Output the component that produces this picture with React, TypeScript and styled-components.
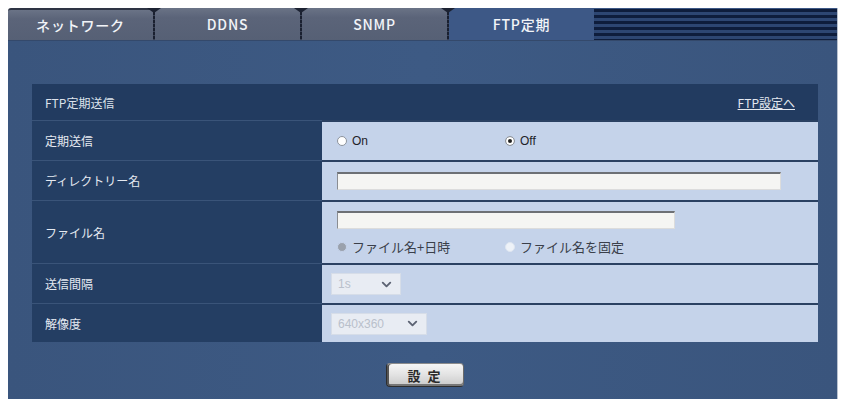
import React from 'react';
import styled, { createGlobalStyle } from 'styled-components';
import { ChevronDown } from 'lucide-react';

const GlobalStyle = createGlobalStyle`
    body {
        margin: 0;
        background: #ffffff;
        font-family: "Noto Sans CJK JP", "Liberation Sans", sans-serif;
    }
`

type RowPropsType = {
    h: number
}

type RadioPropsType = {
    checked?: boolean
    faint?: boolean
}

const tabs = ['ネットワーク', 'DDNS', 'SNMP', 'FTP定期']

export default function App() {
    return (
        <>
            <GlobalStyle />
            <Page>
                <Panel>
                    <TabBar>
                        {tabs.map((t, i) => (
                            <React.Fragment key={t}>
                                {i > 0 && <Divider />}
                                <Tab active={i === tabs.length - 1} first={i === 0}>{t}</Tab>
                            </React.Fragment>
                        ))}
                        <Stripes />
                    </TabBar>
                    <Body>
                        <Table>
                            <HeaderRow>
                                <span>FTP定期送信</span>
                                <HeaderLink href={'#'}>FTP設定へ</HeaderLink>
                            </HeaderRow>

                            <Row h={40}>
                                <Label>定期送信</Label>
                                <Value>
                                    <Options>
                                        <Option><Radio />On</Option>
                                        <Option><Radio checked />Off</Option>
                                    </Options>
                                </Value>
                            </Row>

                            <Row h={40}>
                                <Label>ディレクトリー名</Label>
                                <Value>
                                    <TextInput w={444} />
                                </Value>
                            </Row>

                            <Row h={63}>
                                <Label>ファイル名</Label>
                                <Value column>
                                    <TextInput w={338} />
                                    <Options soft>
                                        <Option><Radio checked faint />ファイル名+日時</Option>
                                        <Option><Radio faint />ファイル名を固定</Option>
                                    </Options>
                                </Value>
                            </Row>

                            <Row h={40}>
                                <Label>送信間隔</Label>
                                <Value>
                                    <Select w={70}>
                                        <span>1s</span>
                                        <ChevronDown size={15} strokeWidth={3} color={'#5c6373'} />
                                    </Select>
                                </Value>
                            </Row>

                            <Row h={39}>
                                <Label>解像度</Label>
                                <Value>
                                    <Select w={96}>
                                        <span>640x360</span>
                                        <ChevronDown size={15} strokeWidth={3} color={'#5c6373'} />
                                    </Select>
                                </Value>
                            </Row>
                        </Table>
                        <ButtonRow>
                            <SetButton>設 定</SetButton>
                        </ButtonRow>
                    </Body>
                </Panel>
            </Page>
        </>
    );
}

const Page = styled.div`
    padding: 8px 5px 2px 8px;
`
const Panel = styled.div`
    width: 830px;
    display: flex;
    flex-direction: column;
    border-right: 1px solid #b9c2cf;
    box-sizing: border-box;
`
const TabBar = styled.div`
    display: flex;
    height: 33px;
    box-sizing: border-box;
    border-bottom: 1px solid #34496b;
`
const Tab = styled.div<{ active?: boolean, first?: boolean }>`
    width: 145px;
    display: flex;
    align-items: center;
    justify-content: center;
    font-size: 14px;
    font-weight: 500;
    letter-spacing: 0.8px;
    color: #f2f4f8;
    background: ${props => props.active
        ? '#3d5886'
        : 'linear-gradient(#6a7386 0%, #5b6479 30%, #566075 100%)'};
    border-top-left-radius: ${props => props.first ? '3px' : '0'};
    border-top: ${props => props.first ? '2px solid #2e3444' : 'none'};
    box-sizing: border-box;
`
const Divider = styled.div`
    width: 2px;
    position: relative;
    background: repeating-linear-gradient(#1a2030 0 3px, #3a4256 3px 4px);
    &::before {
        content: '';
        position: absolute;
        top: 0;
        left: -6px;
        border-left: 7px solid transparent;
        border-right: 7px solid transparent;
        border-top: 5px solid #1c2232;
    }
`
const Stripes = styled.div`
    flex: 1;
    background: #3d5886;
    background-image: repeating-linear-gradient(#0e1d3c 0 3px, #2d4672 3px 6px);
    background-size: 100% 31px;
    background-position: 0 1px;
    background-repeat: no-repeat;
`
const Body = styled.div`
    background: linear-gradient(90deg, #3a557d 0%, #3d5a84 50%, #3a557d 100%);
    padding: 43px 19px 12px 24px;
    display: flex;
    flex-direction: column;
`
const Table = styled.div`
    display: flex;
    flex-direction: column;
    font-size: 12px;
`
const HeaderRow = styled.div`
    height: 36px;
    background: #223b60;
    color: #dde3ec;
    display: flex;
    align-items: center;
    justify-content: space-between;
    padding: 0 23px 0 13px;
`
const HeaderLink = styled.a`
    color: #e3e8f0;
    text-decoration: underline;
`
const Row = styled.div<RowPropsType>`
    display: grid;
    grid-template-columns: 290px 1fr;
    height: ${props => props.h}px;
`
const Label = styled.div`
    background: #243e63;
    border-top: 1px solid #3a5479;
    color: #e4e9f1;
    display: flex;
    align-items: center;
    padding-left: 13px;
`
const Value = styled.div<{ column?: boolean }>`
    background: #c5d3ea;
    border-top: 2px solid #2b4162;
    display: flex;
    flex-direction: ${props => props.column ? 'column' : 'row'};
    justify-content: flex-start;
    align-items: ${props => props.column ? 'flex-start' : 'center'};
    padding-top: ${props => props.column ? '9px' : '0'};
    gap: ${props => props.column ? '8px' : '0'};
    padding-left: 15px;
`
const Options = styled.div<{ soft?: boolean }>`
    display: flex;
    width: 100%;
    color: ${props => props.soft ? '#3a3f4a' : '#1f2228'};
    font-family: ${props => props.soft ? '"Noto Sans CJK JP", sans-serif' : '"Liberation Sans", "Noto Sans CJK JP", sans-serif'};
    font-size: ${props => props.soft ? '13px' : '12px'};
`
const Option = styled.div`
    width: 168px;
    display: flex;
    align-items: center;
    gap: 3px;
`
const Radio = styled.span<RadioPropsType>`
    width: 10px;
    height: 10px;
    border-radius: 50%;
    box-sizing: border-box;
    background: ${props => props.faint ? (props.checked ? '#9aa1ac' : '#eef2f8') : '#ffffff'};
    border: 1px solid ${props => props.faint ? (props.checked ? '#c5d3ea' : '#dfe6f1') : '#8d939c'};
    box-shadow: ${props => props.checked && !props.faint ? 'inset 0 0 0 2px #ffffff, inset 0 0 0 5px #202020' : 'none'};
    margin-right: 2px;
`
const TextInput = styled.div<{ w: number }>`
    width: ${props => props.w}px;
    height: 18px;
    box-sizing: border-box;
    background: #f5f5f3;
    border: 1px solid #dcdcdc;
    border-top: 2px solid #6d7075;
    border-left: 1px solid #8a8d92;
`
const Select = styled.div<{ w: number }>`
    width: ${props => props.w}px;
    height: 22px;
    margin-left: -6px;
    box-sizing: border-box;
    background: #e8ecf3;
    border: 1px solid #d6dde8;
    display: flex;
    align-items: center;
    justify-content: space-between;
    padding: 0 6px 0 6px;
    color: #b9c0cb;
    font-family: "Liberation Sans", sans-serif;
    font-size: 12px;
`
const ButtonRow = styled.div`
    display: flex;
    justify-content: center;
    padding-top: 21px;
`
const SetButton = styled.button`
    width: 78px;
    height: 24px;
    border-radius: 4px;
    border: 1px solid #2e2e2e;
    border-top-color: #8c8c8c;
    border-right-color: #6a6a6a;
    background: linear-gradient(#f6f6f6 0%, #e2e2e2 50%, #c9c9c9 100%);
    box-shadow: inset 2px 0 0 #555, inset 0 -2px 0 #777;
    font-family: "Noto Sans CJK JP", sans-serif;
    font-size: 13px;
    font-weight: bold;
    color: #2a2a2a;
    letter-spacing: 2px;
    padding: 0;
`
